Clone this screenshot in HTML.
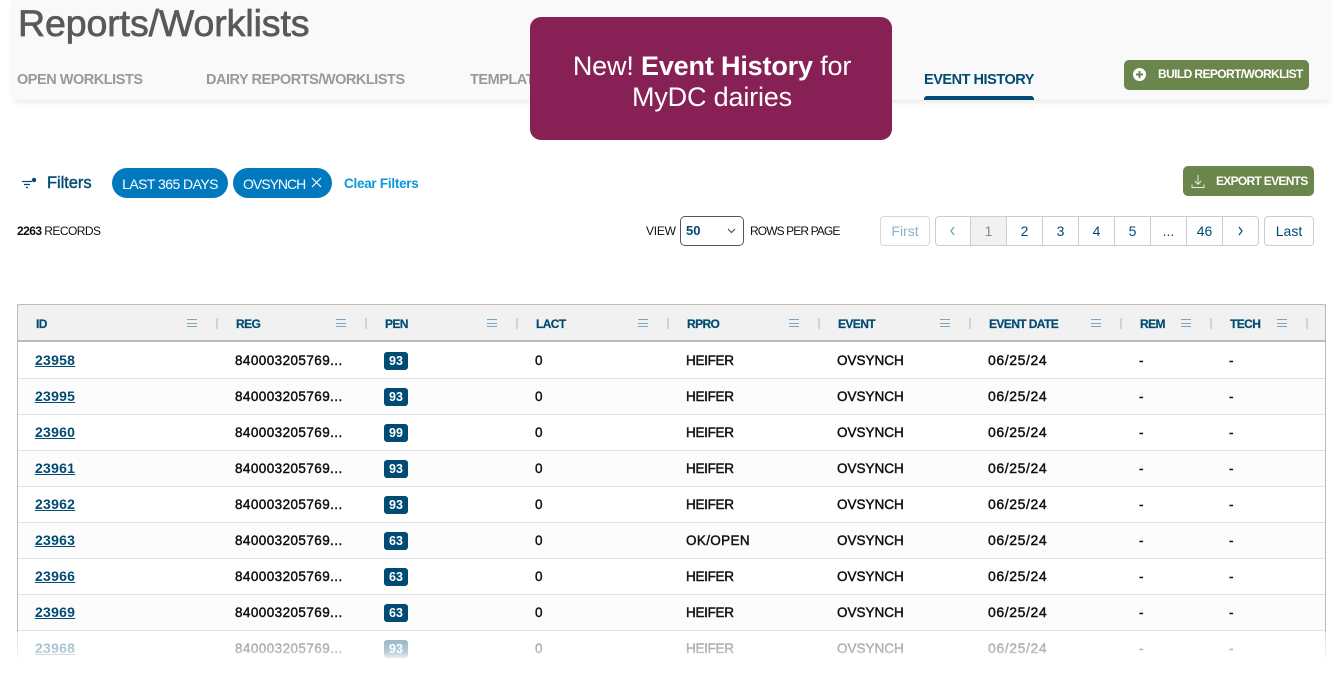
<!DOCTYPE html>
<html lang="en"><head><meta charset="utf-8"><title>Reports/Worklists</title>
<style>
html,body{margin:0;padding:0;background:#fff}
#p{position:relative;width:1343px;height:676px;overflow:hidden;background:#fff;font-family:"Liberation Sans",sans-serif;color:#000}
#p div,#p span.a{position:absolute;white-space:nowrap}
#hd{left:11px;top:0;width:1321px;height:100px;background:#f9f9f9;box-shadow:0 5px 6px -3px rgba(0,0,0,.1)}
.t{top:71px;font-size:14.500px;line-height:18px;font-weight:700;color:#999;letter-spacing:-.47px}
.btn{background:#6b864d;border-radius:5px;color:#fff}
.chip{top:168px;height:30px;border-radius:15px;background:#0079bf;color:#fff;font-size:14px;line-height:32px}
.pg{top:216px;height:28px;border:1px solid #d5d9dc;background:#fff;border-radius:4px;text-align:center;font-size:14px;line-height:29px;color:#004b73}
.c{top:216px;height:28px;width:35px;border:1px solid #c9ced1;border-left:0;text-align:center;font-size:14px;line-height:29px;color:#004b73;background:#fff}
#th{left:17px;top:304px;width:1307px;height:35px;background:#f1f1f1;border:1px solid #bbb;border-bottom:2px solid #bbb;border-radius:3px 3px 0 0}
.h{top:317px;font-size:12px;line-height:14px;font-weight:700;color:#004b73;letter-spacing:-.6px;-webkit-text-stroke:.2px #004b73}
.m{top:319px;width:10px;height:6px;border-top:1px solid #7ba6c1;border-bottom:1px solid #7ba6c1;background:linear-gradient(#7ba6c1,#7ba6c1) 0 2.500px/100% 1px no-repeat}
.s{top:318px;width:2px;height:11px;background:#d3d3d3}
.r{left:18px;width:1307px;height:35px;border-bottom:1px solid #dfe1e5;background:#fff}
.r.e{background:#fcfcfc}
.r span{position:absolute;top:9px;font-size:13.500px;line-height:18px;font-weight:400;color:#111;-webkit-text-stroke:.45px #111;white-space:nowrap}
.r span:nth-child(1){left:17px;top:8px;color:#004b73;-webkit-text-stroke:0;font-weight:700;text-decoration:underline;font-size:14px;letter-spacing:.25px}
.r span:nth-child(2){left:217px;letter-spacing:.42px}
.r span:nth-child(3){left:366px;top:9px;width:24px;height:18px;background:#004b73;color:#fff;-webkit-text-stroke:0;font-weight:700;border-radius:3px;text-align:center;font-size:12.500px;line-height:18px}
.r span:nth-child(4){left:517px}
.r span:nth-child(5){left:668px;letter-spacing:-.3px}
.r span:nth-child(6){left:819px}
.r span:nth-child(7){left:970px;top:8px;font-size:14px;letter-spacing:.6px}
.r span:nth-child(8){left:1121px}
.r span:nth-child(9){left:1211px}
</style></head><body><div id="p">

<div id="hd"></div>
<div style="left:18px;top:2px;font-size:37.500px;line-height:42px;color:#58595b;-webkit-text-stroke:.7px #58595b;letter-spacing:-.1px">Reports/Worklists</div>
<div class="t" style="left:17px">OPEN WORKLISTS</div>
<div class="t" style="left:206px">DAIRY REPORTS/WORKLISTS</div>
<div class="t" style="left:470px">TEMPLATES</div>
<div class="t" style="left:924px;color:#004b73">EVENT HISTORY</div>
<div style="left:924px;top:96px;width:110px;height:4px;background:#004b73;border-radius:3px 3px 0 0"></div>

<div class="btn" style="left:1124px;top:60px;width:185px;height:30px"></div>
<svg style="position:absolute;left:1132px;top:67px" width="15" height="15" viewBox="0 0 15 15"><circle cx="7.500" cy="7.500" r="6.500" fill="#fff"/><path d="M7.500 4v7M4 7.500h7" stroke="#6b864d" stroke-width="2"/></svg>
<div style="left:1158px;top:67px;font-size:12px;line-height:15px;font-weight:700;color:#fff;letter-spacing:-.6px">BUILD REPORT/WORKLIST</div>

<div style="left:530px;top:17px;width:362px;height:123px;background:#872155;border-radius:11px"></div>
<div style="left:531px;top:51px;width:362px;text-align:center;font-size:27px;line-height:31px;color:#fff;letter-spacing:-.17px;white-space:normal">New! <b>Event History</b> for<br>MyDC dairies</div>

<svg style="position:absolute;left:21px;top:177px" width="17" height="13" viewBox="0 0 17 13"><path d="M1 4.500h10M3 7.500h6M5 10.500h2" stroke="#004b73" stroke-width="1.200" fill="none"/><circle cx="13" cy="3" r="2.200" fill="#004b73"/></svg>
<div style="left:47px;top:174px;font-size:16.500px;line-height:19px;color:#004b73;-webkit-text-stroke:.4px #004b73;letter-spacing:-.05px">Filters</div>
<div class="chip" style="left:112px;width:116px;text-align:center;letter-spacing:-.55px">LAST 365 DAYS</div>
<div class="chip" style="left:233px;width:99px"><span style="margin-left:10px;letter-spacing:-1px">OVSYNCH</span></div>
<svg style="position:absolute;left:311px;top:177px" width="11" height="11" viewBox="0 0 11 11"><path d="M1 1l9 9M10 1l-9 9" stroke="#fff" stroke-width="1.200" fill="none"/></svg>
<div style="left:344px;top:176px;font-size:13.500px;line-height:16px;font-weight:700;color:#0a97dc;letter-spacing:-.27px">Clear Filters</div>

<div class="btn" style="left:1183px;top:166px;width:131px;height:30px"></div>
<svg style="position:absolute;left:1191px;top:174px" width="14" height="15" viewBox="0 0 14 15"><path d="M7 1v9M3.800 7L7 10.300 10.200 7M1 10.500V13.500H13V10.500" stroke="#e6ecdf" stroke-width="1" fill="none"/></svg>
<div style="left:1216px;top:173.500px;font-size:12px;line-height:15px;font-weight:700;color:#fff;letter-spacing:-.7px">EXPORT EVENTS</div>

<div style="left:17px;top:223.500px;font-size:12px;line-height:15px;color:#111;letter-spacing:-.55px"><b>2263</b> RECORDS</div>
<div style="left:646px;top:223.500px;font-size:12px;line-height:15px;color:#111;letter-spacing:-.25px">VIEW</div>
<div style="left:680px;top:216px;width:62px;height:28px;border:1px solid #555;border-radius:5px;background:#fff"></div>
<div style="left:686px;top:223px;font-size:13px;line-height:15px;font-weight:700;color:#004b73">50</div>
<svg style="position:absolute;left:727px;top:228px" width="9" height="6" viewBox="0 0 9 6"><path d="M1 1l3.500 3.500L8 1" stroke="#555" stroke-width="1.200" fill="none"/></svg>
<div style="left:750px;top:223.500px;font-size:12px;line-height:15px;color:#111;letter-spacing:-.9px">ROWS PER PAGE</div>

<div class="pg" style="left:880px;width:48px;color:#8fb0c4">First</div>
<div class="pg" style="left:935px;width:35px;border-radius:4px 0 0 4px;border-right:0;border-color:#c9ced1"></div>
<svg style="position:absolute;left:949px;top:226px" width="7" height="10" viewBox="0 0 7 10"><path d="M5 1L2 5l3 4" stroke="#6f9ab3" stroke-width="1.200" fill="none"/></svg>
<div class="c" style="left:970px;background:#f1f1f1;color:#888;border-left:1px solid #c9ced1;width:35px">1</div>
<div class="c" style="left:1007px">2</div>
<div class="c" style="left:1043px">3</div>
<div class="c" style="left:1079px">4</div>
<div class="c" style="left:1115px">5</div>
<div class="c" style="left:1151px">...</div>
<div class="c" style="left:1187px">46</div>
<div class="c" style="left:1223px;border-radius:0 4px 4px 0"></div>
<svg style="position:absolute;left:1237px;top:226px" width="7" height="10" viewBox="0 0 7 10"><path d="M2 1l3 4-3 4" stroke="#004b73" stroke-width="1.200" fill="none"/></svg>
<div class="pg" style="left:1264px;width:48px;border-color:#c9ced1">Last</div>

<div style="left:17px;top:304px;width:1307px;height:360px;border-left:1px solid #bbb;border-right:1px solid #bbb"></div>
<div id="th"></div>
<div class="h" style="left:36px">ID</div><div class="h" style="left:236px">REG</div><div class="h" style="left:385px">PEN</div><div class="h" style="left:536px">LACT</div><div class="h" style="left:687px">RPRO</div><div class="h" style="left:838px">EVENT</div><div class="h" style="left:989px">EVENT DATE</div><div class="h" style="left:1140px">REM</div><div class="h" style="left:1230px">TECH</div>
<div class="m" style="left:187px"></div><div class="m" style="left:336px"></div><div class="m" style="left:487px"></div><div class="m" style="left:638px"></div><div class="m" style="left:789px"></div><div class="m" style="left:940px"></div><div class="m" style="left:1091px"></div><div class="m" style="left:1181px"></div><div class="m" style="left:1277px"></div>
<div class="s" style="left:216px"></div><div class="s" style="left:365px"></div><div class="s" style="left:516px"></div><div class="s" style="left:667px"></div><div class="s" style="left:818px"></div><div class="s" style="left:969px"></div><div class="s" style="left:1120px"></div><div class="s" style="left:1210px"></div><div class="s" style="left:1306px"></div>

<div class="r" style="top:343px"><span>23958</span><span>840003205769...</span><span>93</span><span>0</span><span>HEIFER</span><span>OVSYNCH</span><span>06/25/24</span><span>-</span><span>-</span></div>
<div class="r e" style="top:379px"><span>23995</span><span>840003205769...</span><span>93</span><span>0</span><span>HEIFER</span><span>OVSYNCH</span><span>06/25/24</span><span>-</span><span>-</span></div>
<div class="r" style="top:415px"><span>23960</span><span>840003205769...</span><span>99</span><span>0</span><span>HEIFER</span><span>OVSYNCH</span><span>06/25/24</span><span>-</span><span>-</span></div>
<div class="r e" style="top:451px"><span>23961</span><span>840003205769...</span><span>93</span><span>0</span><span>HEIFER</span><span>OVSYNCH</span><span>06/25/24</span><span>-</span><span>-</span></div>
<div class="r" style="top:487px"><span>23962</span><span>840003205769...</span><span>93</span><span>0</span><span>HEIFER</span><span>OVSYNCH</span><span>06/25/24</span><span>-</span><span>-</span></div>
<div class="r e" style="top:523px"><span>23963</span><span>840003205769...</span><span>63</span><span>0</span><span style="letter-spacing:.35px">OK/OPEN</span><span>OVSYNCH</span><span>06/25/24</span><span>-</span><span>-</span></div>
<div class="r" style="top:559px"><span>23966</span><span>840003205769...</span><span>63</span><span>0</span><span>HEIFER</span><span>OVSYNCH</span><span>06/25/24</span><span>-</span><span>-</span></div>
<div class="r e" style="top:595px"><span>23969</span><span>840003205769...</span><span>63</span><span>0</span><span>HEIFER</span><span>OVSYNCH</span><span>06/25/24</span><span>-</span><span>-</span></div>
<div class="r" style="top:631px"><span>23968</span><span>840003205769...</span><span>93</span><span>0</span><span>HEIFER</span><span>OVSYNCH</span><span>06/25/24</span><span>-</span><span>-</span></div>
<div style="left:0;top:632px;width:1343px;height:32px;background:linear-gradient(rgba(255,255,255,.55) 0%,rgba(255,255,255,.7) 60%,rgba(255,255,255,.95) 85%,#fff 100%)"></div>
<div style="left:0;top:664px;width:1343px;height:12px;background:#fff"></div>
</div></body></html>
